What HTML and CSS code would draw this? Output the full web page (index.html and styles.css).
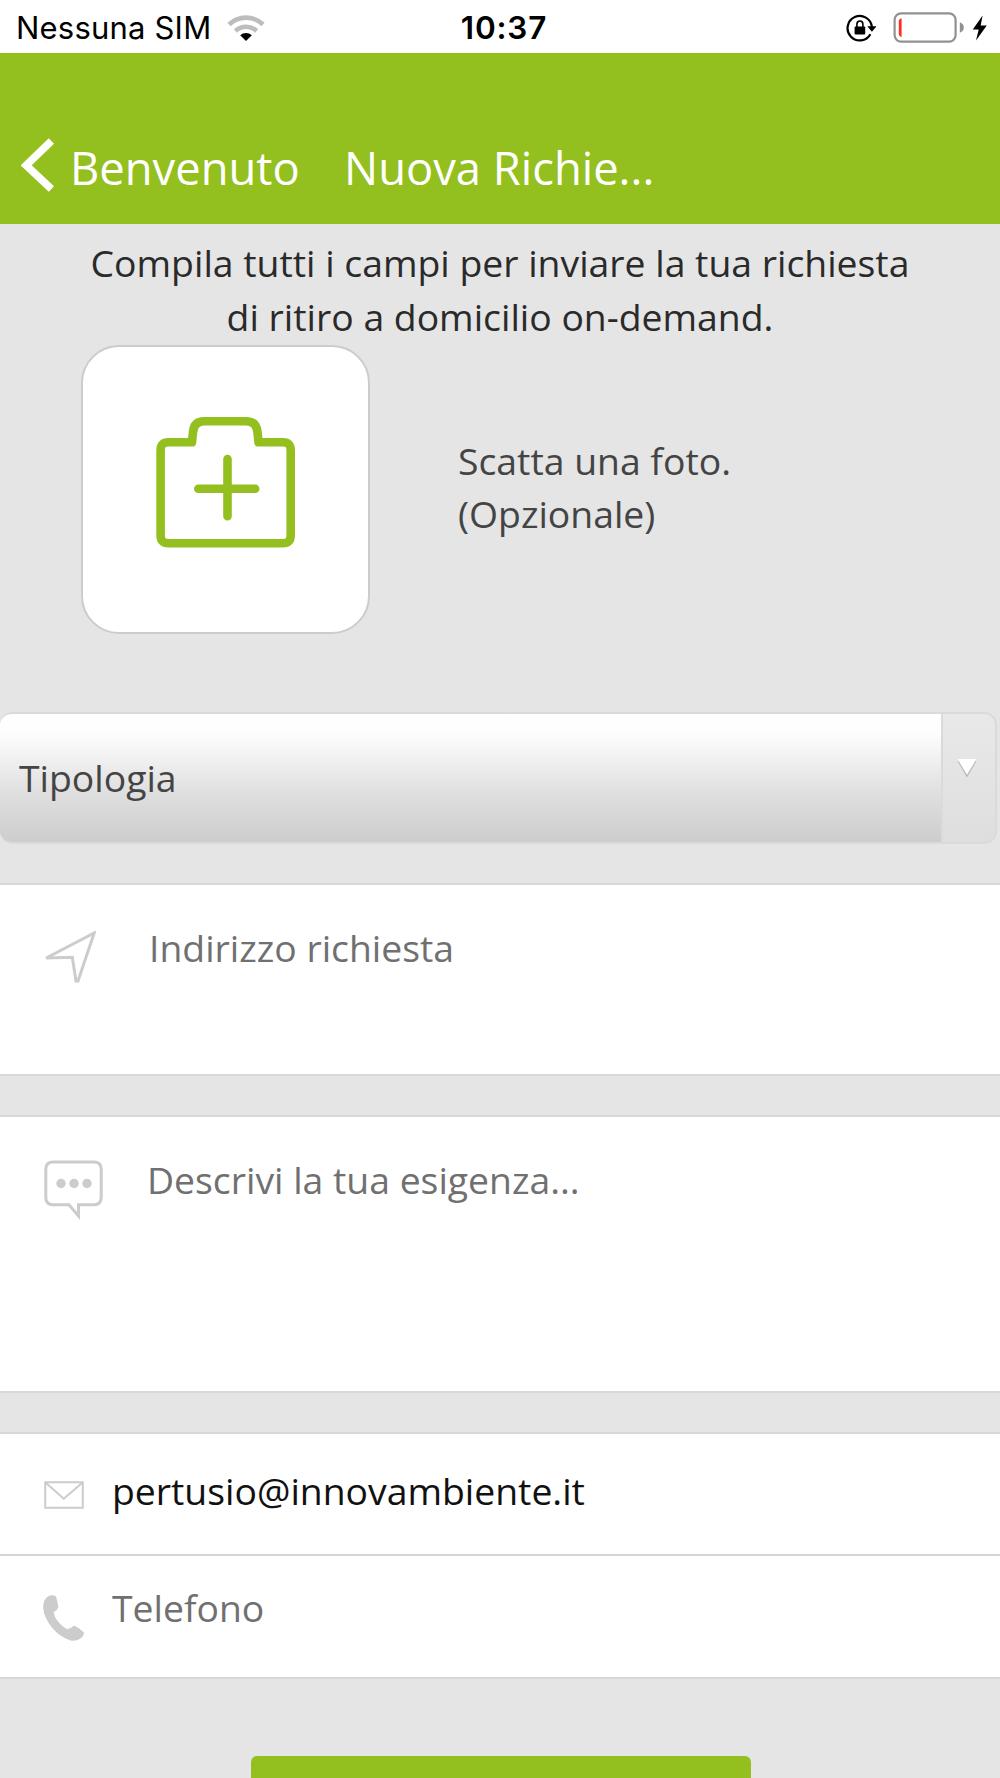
FILE: index.html
```
<!DOCTYPE html>
<html lang="it">
<head>
    <meta charset="utf-8">
    <meta name="viewport" content="width=device-width, initial-scale=1">
    <title>Nuova Richiesta</title>
    <link rel="stylesheet" href="styles.css">
</head>
<body>
<div class="statusbar">
    <div class="carrier">
        <span class="carrier-name">Nessuna SIM</span>
        <svg class="wifi" width="38" height="28" viewBox="0 0 38 28">
            <path d="M2 10.5A24.5 24.5 0 0 1 36 10.5M8.4 17A15.5 15.5 0 0 1 29.6 17" fill="none" stroke="#bdbdbd" stroke-width="4.6"/>
            <path d="M13.2 21.2A8.6 8.6 0 0 1 24.8 21.2L19 27Z"/>
        </svg>
    </div>
    <span class="clock">10:37</span>
    <div class="indicators">
        <svg width="30" height="28" viewBox="0 0 30 28">
            <path d="M24.4 20.2A12.2 12.2 0 1 1 25.9 13" fill="none" stroke="#000" stroke-width="2.2"/>
            <path d="M21.3 12.3h9.2l-4.6 5.5z"/>
            <rect x="8.6" y="12.6" width="10.6" height="8" rx="1"/>
            <path d="M10.9 13.5V10.3a3 3.3 0 0 1 6 0V13.5" fill="none" stroke="#000" stroke-width="1.6"/>
        </svg>
        <svg class="battery" width="72" height="32" viewBox="0 0 72 32">
            <rect x="1.6" y="1.4" width="61" height="28.2" rx="6.5" fill="none" stroke="#919191" stroke-width="2.2"/>
            <path d="M66.8 10.3q4 1.5 4 5.2t-4 5.2z" fill="#919191"/>
            <path d="M8.6 6.2V25a3.4 3.4 0 0 1-2.8-3.4V9.6a3.4 3.4 0 0 1 2.8-3.4z" fill="#ff2d21"/>
        </svg>
        <svg width="16" height="26" viewBox="0 0 16 26">
            <path d="M10.6 .5L.8 14.4h5.9L4 25.4 14.8 10.6H8.7z"/>
        </svg>
    </div>
</div>

<header class="navbar">
    <a class="back">
        <svg width="34" height="54" viewBox="0 0 34 54">
            <path d="M30.4 3L5.2 27.3L30.4 50.9" fill="none" stroke="#fff" stroke-width="7.6"/>
        </svg>
        <span>Benvenuto</span>
    </a>
    <h1 class="title">Nuova Richie...</h1>
</header>

<main>
    <p class="intro">Compila tutti i campi per inviare la tua richiesta<br>di ritiro a domicilio on-demand.</p>

    <div class="photo">
        <div class="photo-box">
            <svg width="140" height="132" viewBox="0 0 140 132">
                <g fill="none" stroke="#93c01f" stroke-width="8.6" stroke-linecap="round" stroke-linejoin="round">
                    <path d="M36 25.3H12.3Q4.6 25.3 4.6 33V118.5Q4.6 126.3 12.3 126.3H127Q134.7 126.3 134.7 118.5V33Q134.7 25.3 127 25.3H102.5L101.5 15Q100.5 4.3 90.5 4.3H48Q38 4.3 37 15Z"/>
                    <path d="M71.5 42V99.2M42.3 71.8H99.2"/>
                </g>
            </svg>
        </div>
        <p class="photo-label">Scatta una foto.<br>(Opzionale)</p>
    </div>

    <div class="select">
        <span class="select-value">Tipologia</span>
        <span class="select-arrow">
            <svg width="22" height="22" viewBox="0 0 22 22">
                <path d="M1.5 3L11 19.5L20.5 3Z" fill="#b9b9b9"/>
                <path d="M1.5 1H20.5L11 16.8Z" fill="#fff"/>
            </svg>
        </span>
    </div>

    <div class="field address">
        <svg class="icon" width="52" height="52" viewBox="0 0 52 52">
            <path d="M1.2 27L49.2 2L33 50H31L27.3 26.2L1.2 27Z" fill="none" stroke="#ccc" stroke-width="3"/>
        </svg>
        <span class="placeholder">Indirizzo richiesta</span>
    </div>

    <div class="field description">
        <svg class="icon" width="60" height="60" viewBox="0 0 60 60">
            <path d="M10 2H51Q58.2 2 58.2 9.2V37.5Q58.2 44.700 51 44.700H35.500V56L26 44.700H10Q2.800 44.700 2.800 37.500V9.200Q2.800 2 10 2Z" fill="none" stroke="#ccc" stroke-width="3"/>
            <g fill="#ccc">
                <circle cx="18" cy="23.5" r="4.7"/>
                <circle cx="31" cy="23.5" r="4.7"/>
                <circle cx="44" cy="23.5" r="4.7"/>
            </g>
        </svg>
        <span class="placeholder">Descrivi la tua esigenza...</span>
    </div>

    <div class="contacts">
        <div class="row email">
            <svg class="icon" width="40" height="28" viewBox="0 0 40 28">
                <path d="M1.2 1.2H38.8V26.8H1.2ZM1.2 1.2L19.8 17.7L38.8 1.2" fill="none" stroke="#ccc" stroke-width="2"/>
            </svg>
            <span>pertusio@innovambiente.it</span>
        </div>
        <div class="row phone">
            <svg class="icon" width="42" height="46" viewBox="0 0 42 46">
                <path d="M5.5 1Q9.5-.5 13 1.5Q14.5 6 15.4 12.5Q14.5 15 10.7 17Q11 21.5 15 26.5Q19.5 32 24 34.3Q28 33.5 31 30.5Q36 32.5 41 37.5Q41 41 37.5 43.5Q33 46.5 27.5 45.5Q16.5 42 8.5 32Q.8 22 .2 13Q0 4.5 5.5 1Z" fill="#ccc"/>
            </svg>
            <span class="placeholder">Telefono</span>
        </div>
    </div>

    <div class="submit"></div>
</main>
</body>
</html>
```
FILE: styles.css
```
* { box-sizing: border-box; }
html, body { height: 100%; }
body {
    margin: 0;
    overflow: hidden;
    background: #e5e5e5;
    color: #444;
    font-family: "Open Sans", sans-serif;
    font-size: 37.33px;
    line-height: 53.33px;
}
svg { display: block; flex: none; }
p, h1 { margin: 0; font-weight: normal; }

.statusbar {
    display: grid;
    grid-template-columns: 1fr auto 1fr;
    align-items: center;
    height: 53px;
    padding: 0 12px 0 16px;
    background: #fff;
    color: #000;
    font-family: Inter, sans-serif;
    font-size: 31px;
    line-height: 54px;
}
.carrier { display: flex; align-items: center; gap: 16px; }
.carrier-name { padding-top: 1px; letter-spacing: .2px; }
.clock { padding: 1px 0 0 4px; font-size: 31.5px; font-weight: 600; letter-spacing: .8px; }
.indicators { display: flex; justify-content: flex-end; align-items: center; }
.battery { margin: 1px 7px 0 17px; }

.navbar {
    display: flex;
    height: 171px;
    padding-top: 83px;
    background: #93c01f;
    color: #fff;
    font-size: 45.33px;
    line-height: 64px;
}
.back { display: flex; width: 344px; padding-left: 21px; gap: 15px; }
.back svg { margin-top: 2px; }
.title { font-size: inherit; }

.intro { padding-top: 12.2px; color: #2a2a2a; text-align: center; }

.photo { display: flex; align-items: center; gap: 88px; margin: 2.1px 0 78px 81px; }
.photo-box {
    width: 289px;
    height: 289px;
    padding: 70px 0 0 72.5px;
    border: 2px solid #ccc;
    border-radius: 38px;
    background: #fff;
}
.photo-label { padding-bottom: 5px; }

.select {
    display: flex;
    width: 997px;
    height: 132px;
    margin-bottom: 39.3px;
    border: 2px solid #dadada;
    border-left: 0;
    border-radius: 13px;
    background: linear-gradient(#e9e9e9, #dedede);
    overflow: hidden;
}
.select-value {
    flex: 1;
    padding: 37px 0 0 19px;
    background: linear-gradient(#fff, #fdfdfd 15%, #e0e0e0 60%, #cdcdcd);
}
.select-arrow { width: 54px; padding: 44px 0 0 13px; border-left: 2px solid #dadada; }

.field, .contacts {
    border: solid #d8d8d8;
    border-width: 2px 0;
    background: #fff;
}
.placeholder { color: #707070; }
.field { display: flex; margin-bottom: 39px; }
.address { height: 193px; padding: 36px 0 0 45px; gap: 52px; }
.address .icon { margin-top: 10px; }
.description { height: 278px; padding: 36px 0 0 43px; gap: 44px; }
.description .icon { margin-top: 7px; }

.contacts { height: 247px; }
.row { display: flex; height: 122px; padding: 30px 0 0 44px; gap: 28px; }
.email { color: #111; border-bottom: 2px solid #d4d4d4; }
.email .icon { margin-top: 17px; }
.phone { padding: 25px 0 0 43px; gap: 27px; }
.phone .icon { margin-top: 14px; }

.submit {
    width: 500px;
    height: 107px;
    margin: 77px 0 0 250.6px;
    border-radius: 6px;
    background: #93c01f;
}
```
